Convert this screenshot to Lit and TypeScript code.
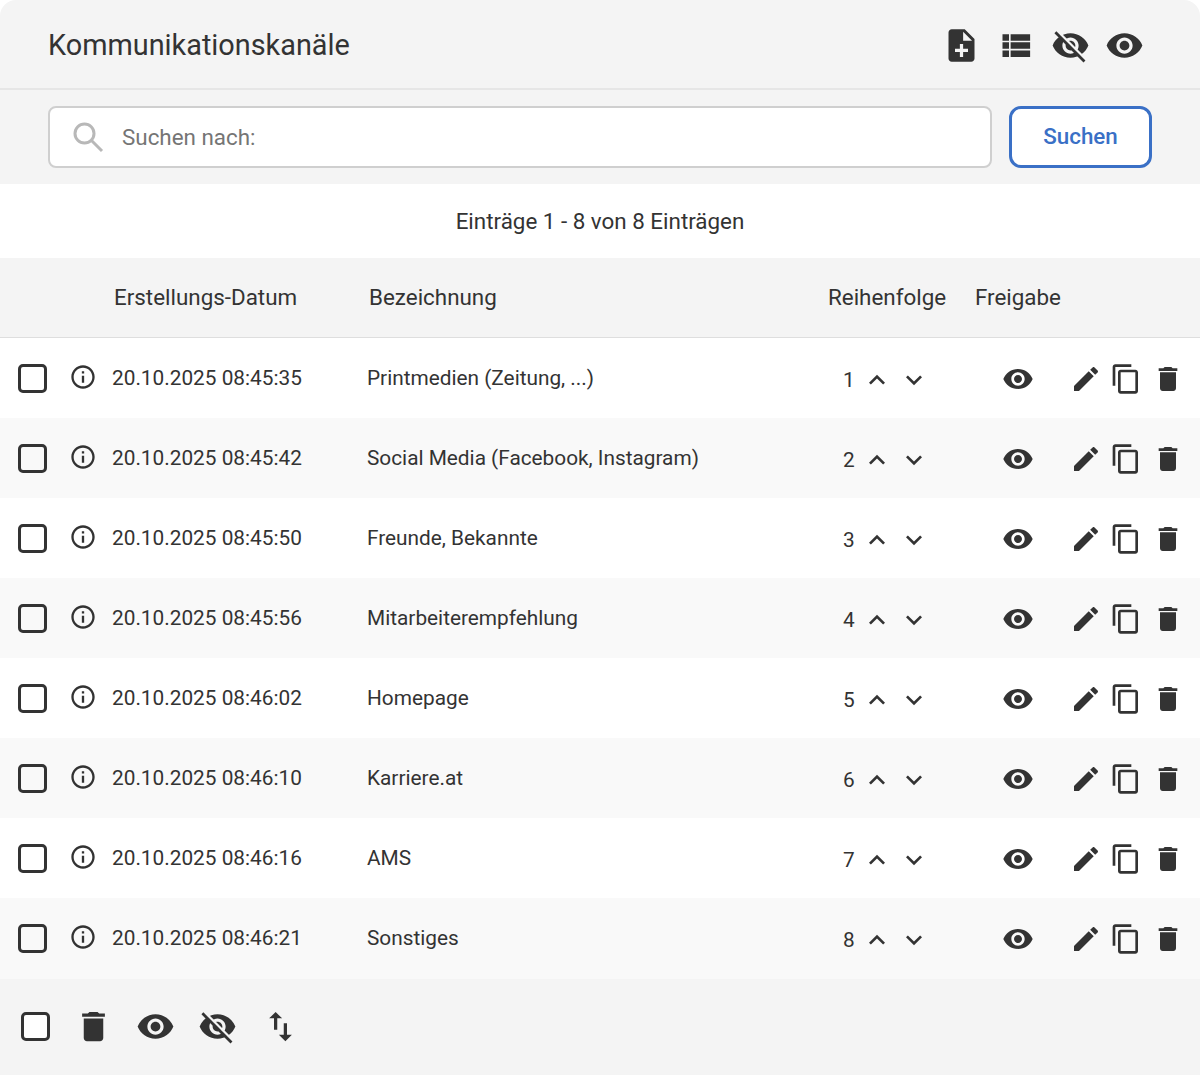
import { LitElement, html, css, svg } from "lit";
import { customElement } from "lit/decorators.js";

const P = {
  eye: "M12 4.5C7 4.5 2.73 7.61 1 12c1.73 4.39 6 7.5 11 7.5s9.27-3.11 11-7.5c-1.73-4.39-6-7.5-11-7.5zM12 17c-2.76 0-5-2.24-5-5s2.24-5 5-5 5 2.24 5 5-2.24 5-5 5zm0-8c-1.66 0-3 1.34-3 3s1.34 3 3 3 3-1.34 3-3-1.34-3-3-3z",
  note: "M14 2H6c-1.1 0-1.99.9-1.99 2L4 20c0 1.1.89 2 1.99 2H18c1.1 0 2-.9 2-2V8l-6-6zm2 14h-3v3h-2v-3H8v-2h3v-3h2v3h3v2zm-3-7V3.5L18.5 9H13z",
  list: "M4 14h4v-4H4v4zm0 5h4v-4H4v4zM4 9h4V5H4v4zm5 5h12v-4H9v4zm0 5h12v-4H9v4zM9 5v4h12V5H9z",
  pencil: "M3 17.25V21h3.75L17.81 9.94l-3.75-3.75L3 17.25zM20.71 7.04c.39-.39.39-1.02 0-1.41l-2.34-2.34c-.39-.39-1.02-.39-1.41 0l-1.83 1.83 3.75 3.75 1.83-1.83z",
  copy: "M16 1H4c-1.1 0-2 .9-2 2v14h2V3h12V1zm3 4H8c-1.1 0-2 .9-2 2v14c0 1.1.9 2 2 2h11c1.1 0 2-.9 2-2V7c0-1.1-.9-2-2-2zm0 16H8V7h11v14z",
  trash: "M6 19c0 1.1.9 2 2 2h8c1.1 0 2-.9 2-2V7H6v12zM19 4h-3.5l-1-1h-5l-1 1H5v2h14V4z",
  up: "M7.41 15.41L12 10.83l4.59 4.58L18 14l-6-6-6 6z",
  down: "M7.41 8.59L12 13.17l4.59-4.58L18 10l-6 6-6-6z",
  info: "M11 7h2v2h-2zm0 4h2v6h-2zm1-9C6.48 2 2 6.48 2 12s4.48 10 10 10 10-4.48 10-10S17.52 2 12 2zm0 18c-4.41 0-8-3.59-8-8s3.59-8 8-8 8 3.59 8 8-3.59 8-8 8z",
  swap: "M16 17.01V10h-2v7.01h-3L15 21l4-3.99h-3zM9 3L5 6.99h3V14h2V6.99h3L9 3z",
};

const icon = (d: string, cls = "") =>
  html`<svg class="i ${cls}" viewBox="0 0 24 24"><path d=${d}></path></svg>`;

const eyeOff = (cls = "") =>
  html`<svg class="i ${cls}" viewBox="0 0 24 24">
    <path d=${P.eye}></path>
    ${svg`<line class="gap" x1="3.7" y1="2.9" x2="21.6" y2="20.8"></line>
    <line class="slash" x1="2.7" y1="3.9" x2="20.6" y2="21.8"></line>`}
  </svg>`;

const ROWS: [string, string][] = [
  ["20.10.2025 08:45:35", "Printmedien (Zeitung, ...)"],
  ["20.10.2025 08:45:42", "Social Media (Facebook, Instagram)"],
  ["20.10.2025 08:45:50", "Freunde, Bekannte"],
  ["20.10.2025 08:45:56", "Mitarbeiterempfehlung"],
  ["20.10.2025 08:46:02", "Homepage"],
  ["20.10.2025 08:46:10", "Karriere.at"],
  ["20.10.2025 08:46:16", "AMS"],
  ["20.10.2025 08:46:21", "Sonstiges"],
];

@customElement("app-root")
export class AppRoot extends LitElement {
  static styles = css`
    :host {
      display: block;
      width: 1200px;
      height: 1075px;
      font-family: Roboto, "Liberation Sans", sans-serif;
      color: #333;
      font-size: 22.4px;
      background: #fff;
    }
    .card {
      display: flex;
      flex-direction: column;
      height: 1075px;
      overflow: hidden;
      border-radius: 16px 16px 0 0;
    }
    .i {
      display: block;
      width: 32px;
      height: 32px;
      fill: #333;
      flex: none;
    }
    .i line { stroke-linecap: butt; }
    .gap { stroke: #f4f4f4; stroke-width: 1.6; }
    .slash { stroke: #333; stroke-width: 1.7; }
    .lg { width: 39px; height: 39px; }
    .head {
      flex: none;
      box-sizing: border-box;
      display: flex;
      align-items: center;
      justify-content: space-between;
      padding: 2px 56px 0 48px;
      background: #f4f4f4;
      border-bottom: 2px solid #e6e6e6;
      height: 90px;
    }
    .title { font-size: 28.85px; }
    .tools { display: flex; gap: 15.5px; align-items: center; }
    .search {
      flex: none;
      display: flex;
      gap: 17px;
      padding: 16px 48px;
      background: #f4f4f4;
      height: 62px;
    }
    .input {
      flex: 1;
      box-sizing: border-box;
      display: flex;
      align-items: center;
      gap: 18px;
      padding-left: 22px;
      background: #fff;
      border: 2px solid #cfcfcf;
      border-radius: 8px;
      color: #757575;
    }
    .mag { width: 32px; height: 32px; fill: none; stroke: #b8b8b8; flex: none; }
    .btn {
      width: 143px;
      box-sizing: border-box;
      display: flex;
      align-items: center;
      justify-content: center;
      background: #fff;
      border: 3px solid #3a70c6;
      border-radius: 12px;
      color: #3a70c6;
      font-weight: 500;
      padding-bottom: 2px;
    }
    .count {
      flex: none;
      height: 74px;
      display: flex;
      align-items: center;
      justify-content: center;
    }
    .grid {
      display: grid;
      grid-template-columns: 112px 255px 461px 147px 86px 1fr;
      align-items: center;
    }
    .thead {
      flex: none;
      height: 80px;
      box-sizing: border-box;
      padding-bottom: 2px;
      background: #f4f4f4;
      border-bottom: 1px solid #dedede;
    }
    .thead span { padding-left: 2px; }
    .thead span.flat { padding-left: 0; }
    .row { flex: none; height: 80px; font-size: 20.8px; }
    .row:nth-child(even) { background: #f9f9f9; }
    .sel {
      display: flex;
      align-items: center;
      padding-left: 18px;
      gap: 22px;
    }
    .box {
      width: 29px;
      height: 29px;
      box-sizing: border-box;
      border: 3px solid #333;
      border-radius: 5px;
      flex: none;
    }
    .sel .i { width: 28px; height: 28px; margin: -2px 0 0 -0.5px; }
    .order { display: flex; align-items: center; padding: 4px 0 0 15px; }
    .order .num { width: 18px; }
    .order .pair { display: flex; gap: 5px; margin-left: -0.5px; }
    .share { display: flex; justify-content: center; padding: 2px 1px 0 0; }
    .acts { display: flex; gap: 8.5px; padding: 2px 0 0 9px; }
    .acts .i:nth-child(2) { margin-left: -0.5px; }
    .acts .i:nth-child(3) { margin-left: 1px; }
    .foot {
      flex: 1;
      display: flex;
      align-items: center;
      padding: 0 0 1px 21px;
      background: #f4f4f4;
      border-top: 1px solid #f9f9f9;
    }
    .foot .box { background: #fff; margin-right: 24px; }
    .foot .tools { gap: 23px; }
    .foot .tools .i:last-child { margin-left: 1px; }
  `;

  render() {
    return html`<div class="card">
      <header class="head">
        <div class="title">Kommunikationskanäle</div>
        <div class="tools">
          ${icon(P.note, "lg")} ${icon(P.list, "lg")} ${eyeOff("lg")} ${icon(P.eye, "lg")}
        </div>
      </header>
      <div class="search">
        <div class="input">
          <svg class="mag" viewBox="0 0 32 32">
            <circle cx="12.5" cy="12.5" r="9.5" stroke-width="3"></circle>
            <line x1="19.5" y1="19.5" x2="30" y2="30" stroke-width="3"></line>
          </svg>
          <span>Suchen nach:</span>
        </div>
        <div class="btn">Suchen</div>
      </div>
      <div class="count">Einträge 1 - 8 von 8 Einträgen</div>
      <div class="grid thead">
        <span></span><span>Erstellungs-Datum</span><span>Bezeichnung</span>
        <span class="flat">Reihenfolge</span><span class="flat">Freigabe</span><span></span>
      </div>
      <div>
        ${ROWS.map(
          ([d, n], idx) => html`<div class="grid row">
            <div class="sel"><div class="box"></div>${icon(P.info)}</div>
            <div>${d}</div>
            <div>${n}</div>
            <div class="order">
              <span class="num">${idx + 1}</span>
              <span class="pair">${icon(P.up)}${icon(P.down)}</span>
            </div>
            <div class="share">${icon(P.eye)}</div>
            <div class="acts">${icon(P.pencil)}${icon(P.copy)}${icon(P.trash)}</div>
          </div>`
        )}
      </div>
      <footer class="foot">
        <div class="box"></div>
        <div class="tools">
          ${icon(P.trash, "lg")} ${icon(P.eye, "lg")} ${eyeOff("lg")} ${icon(P.swap, "lg")}
        </div>
      </footer>
    </div>`;
  }
}
